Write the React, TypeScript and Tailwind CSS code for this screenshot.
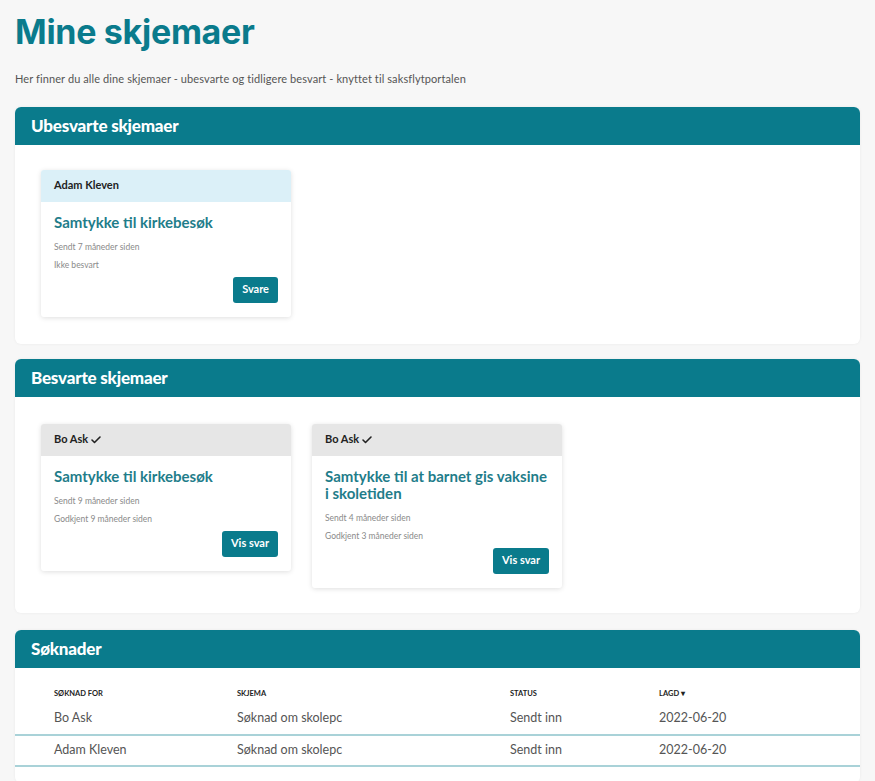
import { Check } from 'lucide-react'

type Card = {
  name: string
  title: string
  lines: string[]
  action: string
  done?: boolean
}

const ubesvarte: Card[] = [
  { name: 'Adam Kleven', title: 'Samtykke til kirkebesøk', lines: ['Sendt 7 måneder siden', 'Ikke besvart'], action: 'Svare' },
]

const besvarte: Card[] = [
  { name: 'Bo Ask', title: 'Samtykke til kirkebesøk', lines: ['Sendt 9 måneder siden', 'Godkjent 9 måneder siden'], action: 'Vis svar', done: true },
  { name: 'Bo Ask', title: 'Samtykke til at barnet gis vaksine i skoletiden', lines: ['Sendt 4 måneder siden', 'Godkjent 3 måneder siden'], action: 'Vis svar', done: true },
]

const soknader = [
  { for: 'Bo Ask', skjema: 'Søknad om skolepc', status: 'Sendt inn', lagd: '2022-06-20' },
  { for: 'Adam Kleven', skjema: 'Søknad om skolepc', status: 'Sendt inn', lagd: '2022-06-20' },
]

function Section({ title, children, className = '' }: { title: string; children: React.ReactNode; className?: string }) {
  return (
    <section className={`rounded-[6px] bg-white shadow-[0_0_3px_rgba(0,0,0,0.06)] ${className}`}>
      <div className="h-[38px] rounded-t-[6px] bg-[#0a7b8c] px-4 flex items-center">
        <h2 className="text-[17px] font-black text-white tracking-[-0.2px]">{title}</h2>
      </div>
      {children}
    </section>
  )
}

function FormCard({ card }: { card: Card }) {
  return (
    <div className="w-[250px] rounded-[3px] bg-white shadow-[0_1px_5px_rgba(0,0,0,0.13)]">
      <div className={`h-[32px] rounded-t-[3px] px-[13px] flex items-center gap-[2px] ${card.done ? 'bg-[#e6e6e6]' : 'bg-[#dbf0f8]'}`}>
        <span className="text-[11px] font-bold text-[#222]">{card.name}</span>
        {card.done && <Check size={12} strokeWidth={3.2} className="text-[#222]" />}
      </div>
      <div className="px-[13px] pt-[12px] pb-[14px]">
        <h3 className="text-[15px] font-bold leading-[17px] text-[#1f7d8a]">{card.title}</h3>
        <div className="mt-[9px] space-y-[3px]">
          {card.lines.map(l => (
            <div key={l} className="text-[8.5px] leading-[15px] text-[#8a8a8a]">{l}</div>
          ))}
        </div>
        <div className="flex justify-end mt-[4px]">
          <button className="h-[26px] px-[9px] rounded-[3px] bg-[#0a7b8c] text-white text-[11px] font-bold">{card.action}</button>
        </div>
      </div>
    </div>
  )
}

export default function App() {
  return (
    <div className="min-h-screen bg-[#f7f7f7] px-[15px] pt-[11px] pb-6 font-['Lato','Liberation_Sans',sans-serif]">
      <h1 className="text-[34px] font-bold leading-[42px] text-[#0a7b8c] font-['Inter','Liberation_Sans',sans-serif] tracking-[-0.3px]">Mine skjemaer</h1>
      <p className="mt-[18px] text-[11px] tracking-[0.1px] text-[#555]">Her finner du alle dine skjemaer - ubesvarte og tidligere besvart - knyttet til saksflytportalen</p>

      <Section title="Ubesvarte skjemaer" className="mt-[19px] w-[845px]">
        <div className="flex gap-[21px] pl-[26px] pt-[25px] pb-[27px]">
          {ubesvarte.map((c, i) => <FormCard key={i} card={c} />)}
        </div>
      </Section>

      <Section title="Besvarte skjemaer" className="mt-[15px] w-[845px]">
        <div className="flex items-start gap-[21px] pl-[26px] pt-[27px] pb-[25px]">
          {besvarte.map((c, i) => <FormCard key={i} card={c} />)}
        </div>
      </Section>

      <Section title="Søknader" className="mt-[17px] w-[845px]">
        <div className="pt-[20px] pb-[16px]">
          <table className="w-full text-left">
            <thead>
              <tr className="text-[7.5px] font-bold uppercase text-[#222]">
                <th className="w-[222px] pl-[39px] pb-[5px] font-bold">Søknad for</th>
                <th className="w-[273px] pb-[5px] font-bold">Skjema</th>
                <th className="w-[149px] pb-[5px] font-bold">Status</th>
                <th className="pb-[5px] font-bold">Lagd ▾</th>
              </tr>
            </thead>
            <tbody>
              {soknader.map((r, i) => (
                <tr key={i} className="border-b-2 border-[#a9d2d8] text-[12.5px] text-[#555]">
                  <td className="h-[31px] pl-[39px]">{r.for}</td>
                  <td>{r.skjema}</td>
                  <td>{r.status}</td>
                  <td>{r.lagd}</td>
                </tr>
              ))}
            </tbody>
          </table>
        </div>
      </Section>
    </div>
  )
}
